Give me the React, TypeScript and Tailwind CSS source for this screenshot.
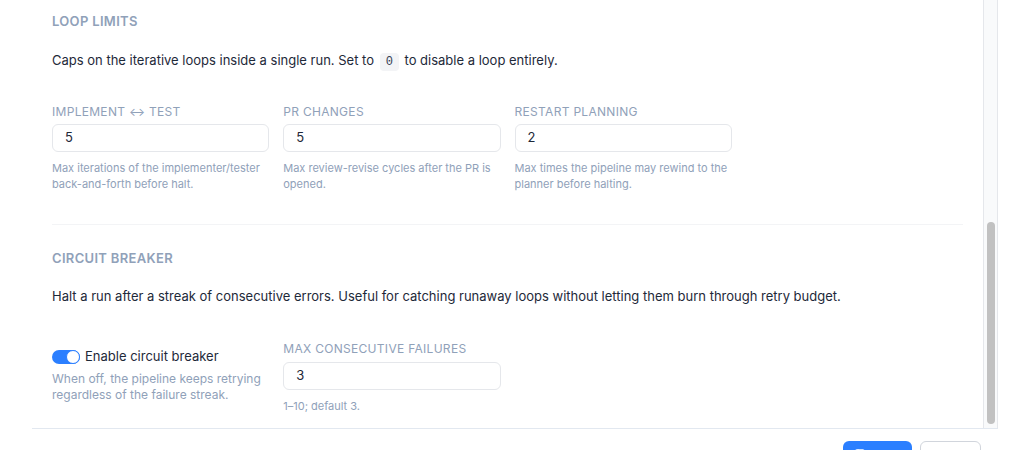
import { Save } from "lucide-react";

const font = { fontFamily: "Inter, 'Noto Sans', sans-serif" };

interface Field {
  label: string;
  value: string;
  help: string;
}

const loopFields: Field[] = [
  {
    label: "Implement ↔ Test",
    value: "5",
    help: "Max iterations of the implementer/tester back-and-forth before halt.",
  },
  {
    label: "PR Changes",
    value: "5",
    help: "Max review-revise cycles after the PR is opened.",
  },
  {
    label: "Restart Planning",
    value: "2",
    help: "Max times the pipeline may rewind to the planner before halting.",
  },
];

const NumberField = ({ field, inputGap, helpGap }: { field: Field; inputGap: string; helpGap: string }) => (
  <div className="flex flex-col">
    <label className="text-xs leading-4 uppercase tracking-wide text-slate-400">{field.label}</label>
    <div
      className={`${inputGap} h-[28px] flex items-center rounded-md border border-gray-200 bg-white px-3 text-[13px] text-gray-800`}
    >
      {field.value}
    </div>
    <p className={`${helpGap} text-[11px] leading-4 text-slate-400`}>{field.help}</p>
  </div>
);

export default function App() {
  return (
    <div className="h-[450px] overflow-hidden bg-white" style={font}>
      {/* スクロール領域 */}
      <div className="mx-8 h-[429px] flex border-b border-slate-200">
        <div className="flex-1 px-5 pt-[11px]">
          {/* ループ制限 */}
          <h3 className="text-[13px] leading-5 font-semibold uppercase tracking-wide text-slate-400">Loop Limits</h3>
          <p className="mt-[19px] text-[13px] leading-5 text-gray-800">
            Caps on the iterative loops inside a single run. Set to{" "}
            <code className="mx-0.5 rounded bg-gray-100 px-1.5 py-0.5 font-mono text-xs text-gray-700">0</code>{" "}
            to disable a loop entirely.
          </p>
          <div className="mt-[34px] grid grid-cols-4 gap-3.5">
            {loopFields.map((f) => (
              <NumberField key={f.label} field={f} inputGap="mt-[4px]" helpGap="mt-[8px]" />
            ))}
          </div>

          <div className="mt-[32px] h-px bg-gray-100" />

          {/* サーキットブレーカー */}
          <h3 className="mt-[23px] text-[13px] leading-5 font-semibold uppercase tracking-wide text-slate-400">
            Circuit Breaker
          </h3>
          <p className="mt-[18px] text-[13px] leading-5 text-gray-800">
            Halt a run after a streak of consecutive errors. Useful for catching runaway loops without letting them burn
            through retry budget.
          </p>
          <div className="mt-[35px] grid grid-cols-4 gap-3.5">
            <div className="pt-[6px]">
              <div className="flex h-5 items-center gap-[5px]">
                <span className="flex h-3.5 w-7 items-center justify-end rounded-full bg-blue-500">
                  <span className="h-3.5 w-3.5 rounded-full border border-blue-500 bg-white" />
                </span>
                <span className="text-[13px] text-gray-800">Enable circuit breaker</span>
              </div>
              <p className="mt-1 text-xs leading-4 text-slate-400">
                When off, the pipeline keeps retrying regardless of the failure streak.
              </p>
            </div>
            <NumberField
              field={{ label: "Max consecutive failures", value: "3", help: "1–10; default 3." }}
              inputGap="mt-[5px]"
              helpGap="mt-[8px]"
            />
          </div>
        </div>

        {/* スクロールバー */}
        <div className="w-[15px] border-x border-gray-200 bg-gray-50 pt-[222px] flex justify-center">
          <div className="h-[202px] w-2 rounded-full bg-[#c1c1c1]" />
        </div>
      </div>

      {/* フッター：ボタンは上端だけ見える */}
      <div className="mx-8 flex justify-end gap-2 pr-[17px] pt-3">
        <button aria-label="Save" className="flex h-10 w-[69px] items-start rounded-md bg-blue-500 pl-[11px] pt-[7px] text-white">
          <Save size={14} />
        </button>
        <button aria-label="Cancel" className="h-10 w-[61px] rounded-md border border-gray-300 bg-white" />
      </div>
    </div>
  );
}
